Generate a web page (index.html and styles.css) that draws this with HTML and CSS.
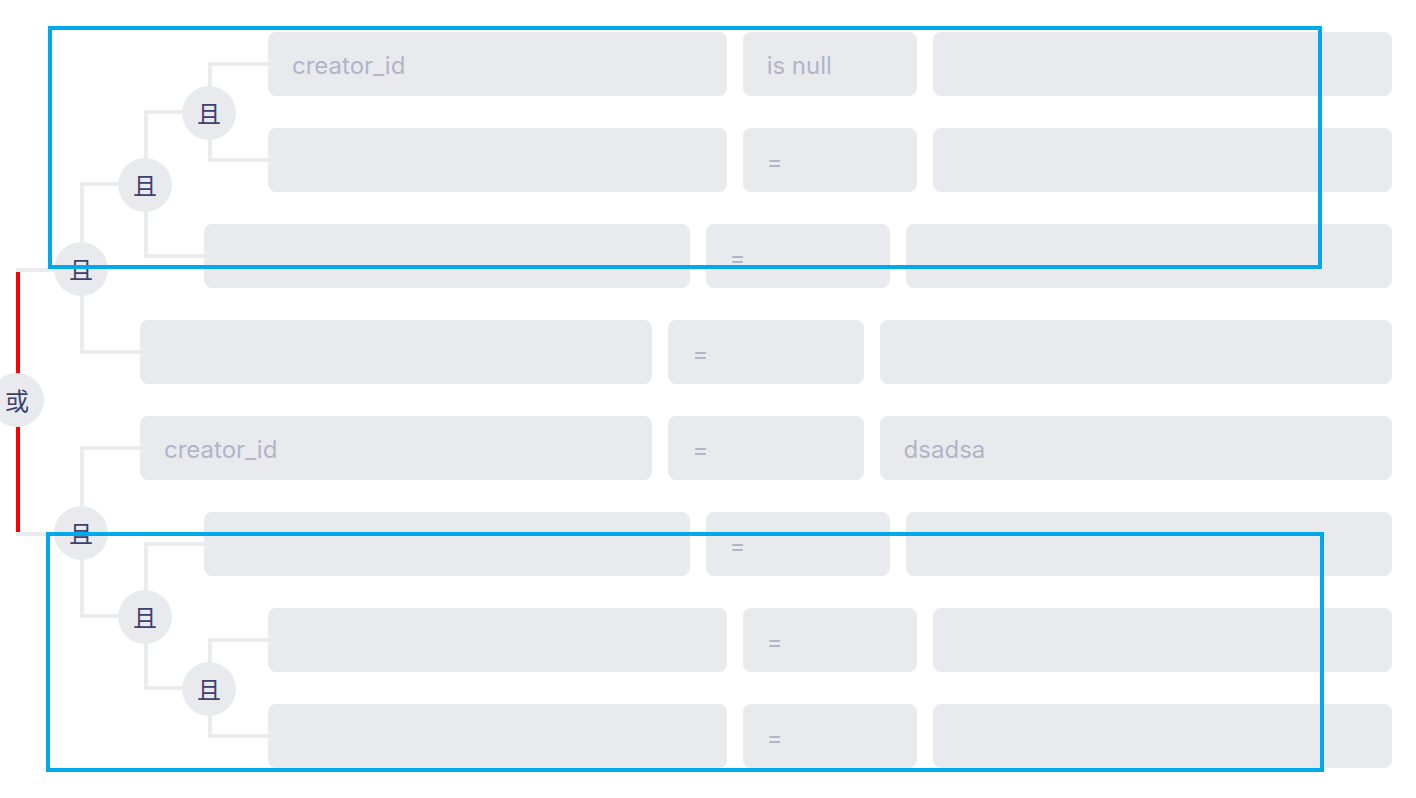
FILE: index.html
```html
<!DOCTYPE html>
<html lang="zh">
<head>
<meta charset="utf-8">
<title>条件构建器</title>
<link rel="stylesheet" href="styles.css">
</head>
<body>
<div class="builder">
  <svg class="tree-lines" width="1416" height="798" viewBox="0 0 1416 798" aria-hidden="true">
    <g fill="#eaebef">
      <!-- L3a -->
      <rect x="208" y="62" width="4" height="100"/>
      <rect x="208" y="62" width="60" height="4"/>
      <rect x="208" y="158" width="60" height="4"/>
      <!-- L2a -->
      <rect x="144" y="110" width="4" height="148"/>
      <rect x="144" y="110" width="38" height="4"/>
      <rect x="144" y="254" width="60" height="4"/>
      <!-- L1a -->
      <rect x="80" y="182" width="4" height="172"/>
      <rect x="80" y="182" width="38" height="4"/>
      <rect x="80" y="350" width="60" height="4"/>
      <!-- L1b -->
      <rect x="80" y="446" width="4" height="172"/>
      <rect x="80" y="446" width="60" height="4"/>
      <rect x="80" y="614" width="38" height="4"/>
      <!-- L2b -->
      <rect x="144" y="542" width="4" height="148"/>
      <rect x="144" y="542" width="60" height="4"/>
      <rect x="144" y="686" width="38" height="4"/>
      <!-- L3b -->
      <rect x="208" y="638" width="4" height="100"/>
      <rect x="208" y="638" width="60" height="4"/>
      <rect x="208" y="734" width="60" height="4"/>
      <!-- root -->
      <rect x="16" y="268" width="38" height="4"/>
      <rect x="16" y="532" width="38" height="4"/>
    </g>
    <rect x="16" y="272" width="4" height="260" fill="#ff0000"/>
  </svg>

  <div class="node node-root">或</div>
  <div class="node node-l1a">且</div>
  <div class="node node-l2a">且</div>
  <div class="node node-l3a">且</div>
  <div class="node node-l1b">且</div>
  <div class="node node-l2b">且</div>
  <div class="node node-l3b">且</div>

  <div class="rows">
    <div class="row lvl3">
      <div class="cell field"><span class="cell-text">creator_id</span></div>
      <div class="cell op"><span class="cell-text">is null</span></div>
      <div class="cell value"></div>
    </div>
    <div class="row lvl3">
      <div class="cell field"></div>
      <div class="cell op"><span class="cell-text">=</span></div>
      <div class="cell value"></div>
    </div>
    <div class="row lvl2">
      <div class="cell field"></div>
      <div class="cell op"><span class="cell-text">=</span></div>
      <div class="cell value"></div>
    </div>
    <div class="row lvl1">
      <div class="cell field"></div>
      <div class="cell op"><span class="cell-text">=</span></div>
      <div class="cell value"></div>
    </div>
    <div class="row lvl1">
      <div class="cell field"><span class="cell-text">creator_id</span></div>
      <div class="cell op"><span class="cell-text">=</span></div>
      <div class="cell value"><span class="cell-text">dsadsa</span></div>
    </div>
    <div class="row lvl2">
      <div class="cell field"></div>
      <div class="cell op"><span class="cell-text">=</span></div>
      <div class="cell value"></div>
    </div>
    <div class="row lvl3">
      <div class="cell field"></div>
      <div class="cell op"><span class="cell-text">=</span></div>
      <div class="cell value"></div>
    </div>
    <div class="row lvl3">
      <div class="cell field"></div>
      <div class="cell op"><span class="cell-text">=</span></div>
      <div class="cell value"></div>
    </div>
  </div>

  <div class="highlight highlight-top"></div>
  <div class="highlight highlight-bottom"></div>
</div>
</body>
</html>
```

FILE: styles.css
```css
html, body {
  margin: 0;
  padding: 0;
  background: #ffffff;
}

body {
  font-family: "Inter", "Noto Sans", "Noto Sans CJK SC", sans-serif;
  overflow: hidden;
}

.builder {
  position: relative;
  width: 1416px;
  height: 798px;
  overflow: hidden;
}

.tree-lines {
  position: absolute;
  left: 0;
  top: 0;
  z-index: 0;
}

.rows {
  position: relative;
  z-index: 1;
  display: flex;
  flex-direction: column;
  gap: 32px;
  padding: 32px 24px 0 0;
}

.row {
  display: flex;
  gap: 16px;
  height: 64px;
}

.lvl1 { margin-left: 140px; }
.lvl2 { margin-left: 204px; }
.lvl3 { margin-left: 268px; }

.cell {
  display: flex;
  align-items: center;
  min-width: 0;
  overflow: hidden;
  background: #e9eaee;
  border-radius: 8px;
  color: #b3b4c6;
  font-size: 24px;
  white-space: nowrap;
}

.cell-text {
  padding: 2px 0 0 24px;
}

.field, .value { flex: 21 1 0; }
.op { flex: 8 1 0; }

.node {
  position: absolute;
  z-index: 2;
  width: 54px;
  height: 54px;
  border-radius: 50%;
  background: #e9eaee;
  color: #3c416e;
  display: flex;
  align-items: center;
  justify-content: center;
  font-family: "Noto Sans CJK SC", "Noto Sans", sans-serif;
  font-size: 24px;
  line-height: 1;
}

.node-root { left: -10px; top: 373px; }
.node-l1a { left: 54px; top: 242px; }
.node-l2a { left: 118px; top: 158px; }
.node-l3a { left: 182px; top: 86px; }
.node-l1b { left: 54px; top: 506px; }
.node-l2b { left: 118px; top: 590px; }
.node-l3b { left: 182px; top: 662px; }

.highlight {
  position: absolute;
  z-index: 3;
  box-sizing: border-box;
  border: 4px solid #00a8ec;
  pointer-events: none;
}

.highlight-top {
  left: 48px;
  top: 26px;
  width: 1274px;
  height: 243px;
}

.highlight-bottom {
  left: 46px;
  top: 532px;
  width: 1278px;
  height: 240px;
}
```
